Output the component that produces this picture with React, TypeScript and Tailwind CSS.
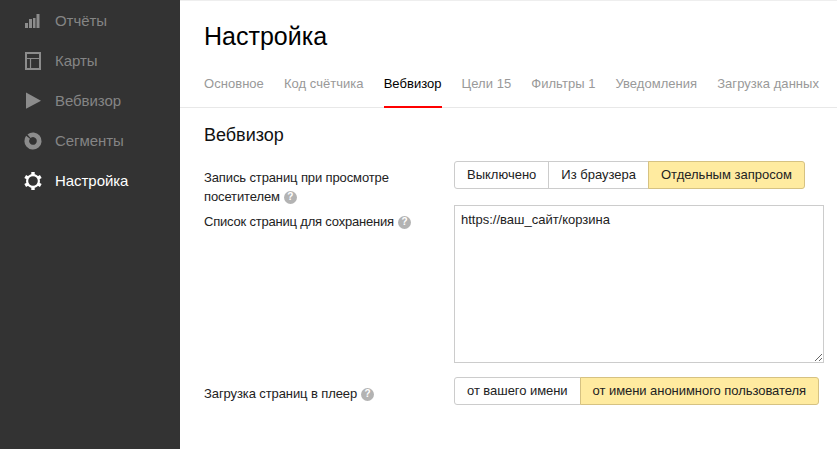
import React from "react";

const Help = () => (
  <span className="inline-flex w-[13px] h-[13px] rounded-full bg-[#b3b3b3] text-white text-[10px] font-bold leading-none items-center justify-center ml-[4px] align-[1px]">?</span>
);

const nav = [
  { label: "Отчёты", icon: (
    <svg width="16" height="15" viewBox="0 0 16 15" fill="#8c8c8c"><rect x="1" y="9" width="3" height="5"/><rect x="5" y="5" width="3" height="9"/><rect x="9" y="4" width="2.5" height="10"/><rect x="12.5" y="0" width="3" height="14"/></svg>
  ) },
  { label: "Карты", icon: (
    <svg width="17" height="18" viewBox="0 0 17 18" fill="none" stroke="#8c8c8c"><rect x="2" y="1" width="14" height="16" strokeWidth="2"/><path d="M2 6.5h14M6.5 6.5V17" strokeWidth="1.2"/></svg>
  ) },
  { label: "Вебвизор", icon: (
    <svg width="18" height="18" viewBox="0 0 18 18" fill="#8c8c8c"><path d="M2 0.5 17 8.7 2 16.8Z"/></svg>
  ) },
  { label: "Сегменты", icon: (
    <svg width="18" height="18" viewBox="0 0 18 18" fill="none" stroke="#8c8c8c"><circle cx="9" cy="9" r="6.2" strokeWidth="4.8" strokeDasharray="36.5 2.5" transform="rotate(230 9 9)"/></svg>
  ) },
  { label: "Настройка", active: true, icon: (
    <svg width="18" height="18" viewBox="0 0 18 18" fill="none" stroke="#fff"><circle cx="9" cy="9" r="5.9" strokeWidth="2.2"/><path d="M9 0v3M9 15v3M1.2 4.5l2.6 1.5M14.2 12l2.6 1.5M1.2 13.5l2.6-1.5M14.2 6l2.6-1.5" strokeWidth="3.4"/></svg>
  ) },
];

const tabs = ["Основное", "Код счётчика", "Вебвизор", "Цели 15", "Фильтры 1", "Уведомления", "Загрузка данных"];

const Seg = ({ items, active, track }: { items: string[]; active: number; track: string }) => (
  <div className={"flex h-[28px] text-[13px] text-[#222] " + track}>
    {items.map((t, i) => (
      <div
        key={t}
        className={
          "flex items-center px-[12px] border " +
          (i === active ? "bg-[#ffeba0] border-[#d6c282] " : "bg-white border-[#ccc] ") +
          (i > 0 ? "-ml-px " : "") +
          (i === 0 ? "rounded-l-[3px] " : "") +
          (i === items.length - 1 ? "rounded-r-[3px]" : "")
        }
      >
        {t}
      </div>
    ))}
  </div>
);

export default function App() {
  return (
    <div className="flex w-[837px] h-[449px] overflow-hidden bg-white font-['Liberation_Sans',Arial,sans-serif]">
      <aside className="w-[180px] shrink-0 bg-[#333] pt-[1px]">
        {nav.map((n) => (
          <div key={n.label} className="flex items-center h-[40px]">
            <div className="w-[55px] pl-[24px] flex items-center shrink-0">{n.icon}</div>
            <span className={"text-[15px] tracking-[-0.05px] " + (n.active ? "text-white" : "text-[#858585]")}>{n.label}</span>
          </div>
        ))}
      </aside>
      <main className="flex-1 min-w-0 border-t border-[#eee]">
        <div className="border-b border-[#e8e8e8] h-[107px] pl-[24px]">
          <h1 className="text-[25px] leading-[28px] pt-[21px] text-black">Настройка</h1>
          <nav className="flex gap-[20px] mt-[17px] text-[13px] tracking-[0.04px]">
            {tabs.map((t) => (
              <div
                key={t}
                className={"h-[41px] pt-[7px] border-b-2 whitespace-nowrap " + (t === "Вебвизор" ? "text-black border-[#f00]" : "text-[#999] border-transparent")}
              >
                {t}
              </div>
            ))}
          </nav>
        </div>
        <section className="pl-[24px] pt-[17px]">
          <h2 className="text-[18px] leading-[20px] text-[#111]">Вебвизор</h2>
          <div className="mt-[16px] flex">
            <div className="w-[250px] h-[44px] text-[13px] leading-[19px] tracking-[-0.12px] text-[#222] pt-[7px]">
              Запись страниц при просмотре<br />посетителем<Help />
            </div>
            <Seg items={["Выключено", "Из браузера", "Отдельным запросом"]} active={2} track="tracking-[0px]" />
          </div>
          <div className="flex">
            <div className="w-[250px] text-[13px] leading-[18px] tracking-[-0.2px] text-[#222] pt-[8px]">
              Список страниц для сохранения<Help />
            </div>
            <textarea
              defaultValue="https://ваш_сайт/корзина"
              className="w-[370px] h-[158px] border border-[#ccc] px-[6px] py-[6px] text-[13px] leading-[16px] text-[#222] outline-none"
            />
          </div>
          <div className="mt-[14px] flex">
            <div className="w-[250px] text-[13px] leading-[18px] tracking-[-0.1px] text-[#222] pt-[8px]">
              Загрузка страниц в плеер<Help />
            </div>
            <Seg items={["от вашего имени", "от имени анонимного пользователя"]} active={1} track="tracking-[-0.05px]" />
          </div>
        </section>
      </main>
    </div>
  );
}
